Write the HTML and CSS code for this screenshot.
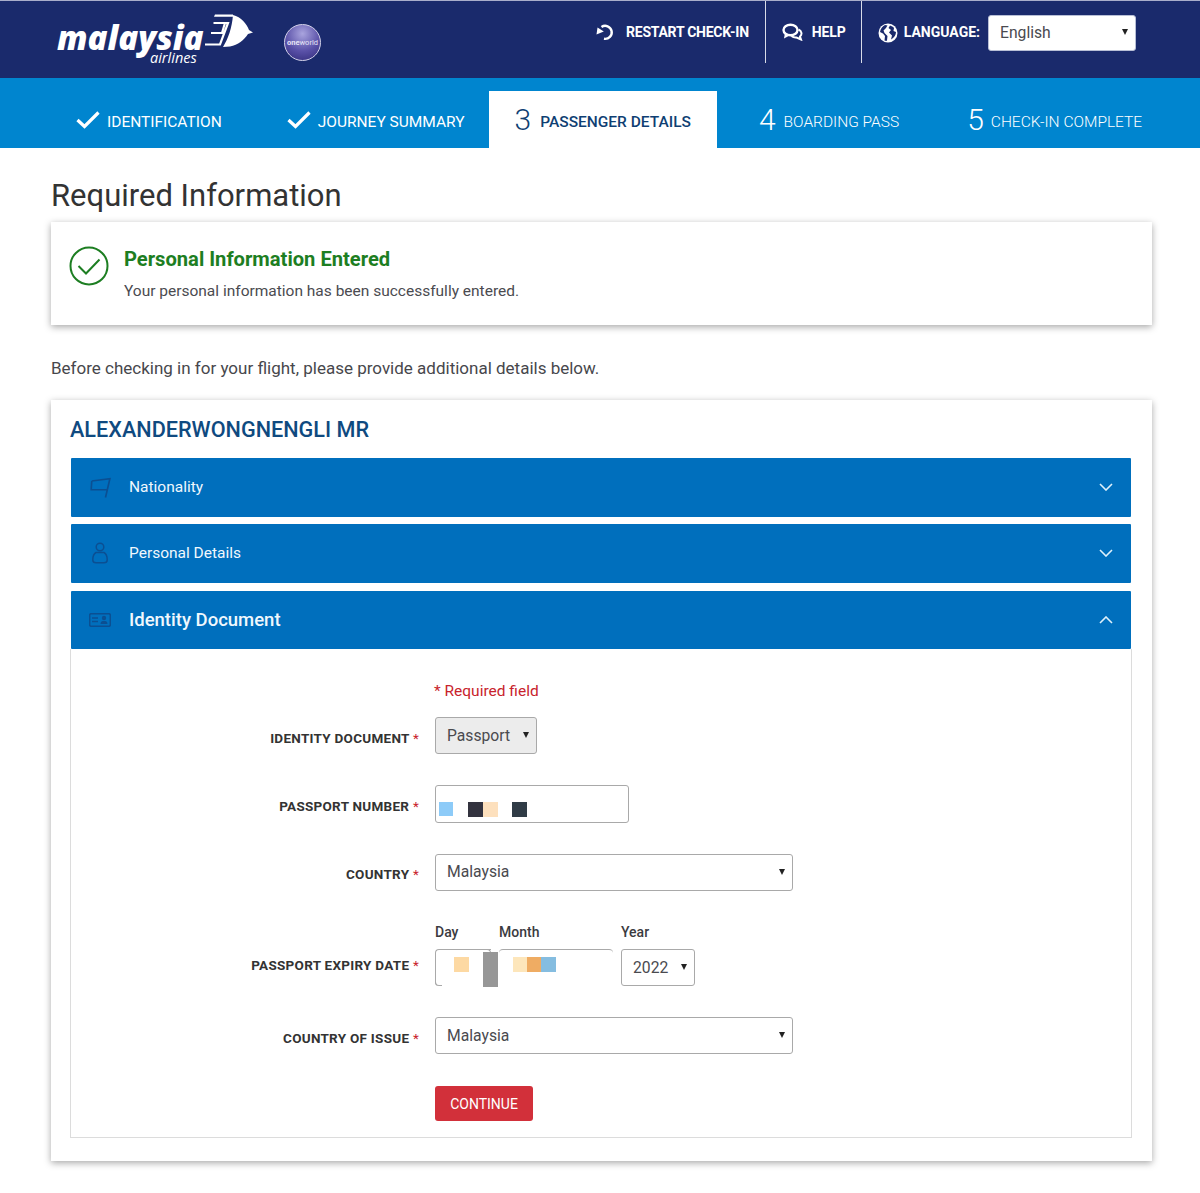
FILE: index.html
```html
<!DOCTYPE html>
<html lang="en">
<head>
<meta charset="utf-8">
<title>Malaysia Airlines Check-in</title>
<link rel="stylesheet" href="styles.css">
</head>
<body>
<header class="topbar">
  <div class="brand">
    <div class="logo">
      <div class="wordmark">
        <span class="wm-main">malaysia</span>
        <span class="wm-sub">airlines</span>
      </div>
      <svg class="kite" viewBox="0 0 60 44" aria-hidden="true">
        <path fill="#fff" d="M15 2.500H33V4.800H14Z"/>
        <path fill="#fff" d="M33 3C41 5 47 12 49 18L53 20.500 48 22C44 28 38 33 30 34.500L23 35C28 27 32 16 33 3Z"/>
        <path fill="none" stroke="#fff" stroke-width="2.200" d="M13.500 11H28L20 32.500H5M11 21H24M25 11L22 21"/>
      </svg>
    </div>
    <div class="oneworld"><span><b>one</b>world</span></div>
  </div>
  <nav class="utility">
    <a class="util util-restart">
      <svg class="util-icon" viewBox="0 0 18 18" aria-hidden="true"><path fill="none" stroke="#fff" stroke-width="2.400" d="M5.500 4A6.500 6.500 0 1 1 8 15.700"/><path fill="#fff" d="M0.500 11.500L1.500 4.500 7.800 8.500Z"/></svg>
      RESTART CHECK-IN
    </a>
    <a class="util util-help">
      <svg class="util-icon help-icon" viewBox="0 0 21 18" aria-hidden="true"><ellipse cx="8.500" cy="7" rx="7" ry="5.300" fill="none" stroke="#fff" stroke-width="2.400"/><path fill="#fff" d="M3 10L2 15.500 8.500 12Z"/><path fill="none" stroke="#fff" stroke-width="2" d="M16.500 6.500C20 8 20.300 11.500 18 13.500L19 16.500 14.500 14.500C12.500 14.800 11 14.300 9.500 13"/></svg>
      <span class="help-text">HELP</span>
    </a>
    <div class="util util-lang">
      <svg class="globe" viewBox="0 0 20 20" aria-hidden="true"><circle cx="10" cy="10" r="9.500" fill="#fff"/><path fill="#1a2a6c" d="M7 2C5 3 2.500 5.500 2 9L5 10.500 7 13 6.500 17.500C8 18 8.500 18 9 17.500L9.500 13 6.500 10 5.500 7.500 8 5 9.500 2.500ZM12 2.500L10.500 5 13 7 11 9.500 14 12.500 13 16.500C16 15 18 12 18 9L15.500 8 16 5C15 3.500 13.500 3 12 2.500Z"/></svg>
      <span class="lang-label">LANGUAGE:</span>
      <div class="select-wrap lang-select"><select class="field"><option>English</option></select></div>
    </div>
  </nav>
</header>

<nav class="steps">
  <div class="step step-1">
    <svg class="tick" viewBox="0 0 24 18" aria-hidden="true"><path fill="none" stroke="#fff" stroke-width="3.200" d="M1.500 9L8.500 15.500 22.500 1.500"/></svg>
    <span>IDENTIFICATION</span>
  </div>
  <div class="step step-2">
    <svg class="tick" viewBox="0 0 24 18" aria-hidden="true"><path fill="none" stroke="#fff" stroke-width="3.200" d="M1.500 9L8.500 15.500 22.500 1.500"/></svg>
    <span>JOURNEY SUMMARY</span>
  </div>
  <div class="step step-3 active"><span class="num">3</span><span>PASSENGER DETAILS</span></div>
  <div class="step step-4 todo"><span class="num">4</span><span>BOARDING PASS</span></div>
  <div class="step step-5 todo"><span class="num">5</span><span>CHECK-IN COMPLETE</span></div>
</nav>

<main class="page">
  <h1 class="title">Required Information</h1>

  <section class="card notice">
    <svg class="ok" viewBox="0 0 40 40" aria-hidden="true"><circle cx="20" cy="20" r="18.500" fill="none" stroke="#1d7e22" stroke-width="2"/><path fill="none" stroke="#1d7e22" stroke-width="2" d="M9.500 20L17 27.500 30.500 13.500"/></svg>
    <div>
      <h2 class="notice-title">Personal Information Entered</h2>
      <p class="notice-text">Your personal information has been successfully entered.</p>
    </div>
  </section>

  <p class="intro">Before checking in for your flight, please provide additional details below.</p>

  <section class="card passenger">
    <h2 class="pax-name">ALEXANDERWONGNENGLI MR</h2>

    <div class="acc-head acc-first">
      <svg class="acc-icon" viewBox="0 0 20 20" aria-hidden="true"><path fill="none" stroke="#0b4f92" stroke-width="1.500" d="M2.500 4.500L19 2.500 15 19.500M2.500 4.500L2 12.500H16.500"/></svg>
      <span class="acc-title">Nationality</span>
      <svg class="chev" viewBox="0 0 14 8" aria-hidden="true"><path fill="none" stroke="#dff1fb" stroke-width="1.600" d="M1 1L7 7 13 1"/></svg>
    </div>
    <div class="acc-head">
      <svg class="acc-icon" viewBox="0 0 20 22" aria-hidden="true"><circle cx="10" cy="5" r="3.800" fill="none" stroke="#0b4f92" stroke-width="1.500"/><path fill="none" stroke="#0b4f92" stroke-width="1.500" d="M6 10.500C3 12 2.800 15 2.800 18 2.800 20 4 20.800 6 20.800H14C16 20.800 17.200 20 17.200 18 17.200 15 17 12 14 10.500Z"/></svg>
      <span class="acc-title">Personal Details</span>
      <svg class="chev" viewBox="0 0 14 8" aria-hidden="true"><path fill="none" stroke="#dff1fb" stroke-width="1.600" d="M1 1L7 7 13 1"/></svg>
    </div>
    <div class="acc-head open">
      <svg class="acc-icon wide" viewBox="0 0 22 14" aria-hidden="true"><rect x="0.700" y="0.700" width="20.600" height="12.600" rx="1.500" fill="none" stroke="#0b4f92" stroke-width="1.500"/><path fill="none" stroke="#0b4f92" stroke-width="1.300" d="M3 5H9M3 8.500H9"/><circle cx="15" cy="5" r="2.200" fill="#0b4f92"/><path fill="#0b4f92" d="M11.500 11C11.500 8.500 13 8 15 8S18.500 8.500 18.500 11Z"/></svg>
      <span class="acc-title big">Identity Document</span>
      <svg class="chev" viewBox="0 0 14 8" aria-hidden="true"><path fill="none" stroke="#dff1fb" stroke-width="1.600" d="M1 7L7 1 13 7"/></svg>
    </div>

    <form class="acc-body">
      <p class="required-note">* Required field</p>

      <div class="row row-doc">
        <label class="lab">IDENTITY DOCUMENT <i>*</i></label>
        <div class="select-wrap doc-select"><select class="field grey"><option>Passport</option></select></div>
      </div>

      <div class="row row-pass">
        <label class="lab">PASSPORT NUMBER <i>*</i></label>
        <div class="mask-input">
          <span class="px c-blue"></span><span class="px c-ink sp-a"></span><span class="px c-peach"></span><span class="px c-slate sp-b"></span>
        </div>
      </div>

      <div class="row row-country">
        <label class="lab">COUNTRY <i>*</i></label>
        <div class="select-wrap wide-select"><select class="field"><option>Malaysia</option></select></div>
      </div>

      <div class="row row-date">
        <label class="lab">PASSPORT EXPIRY DATE <i>*</i></label>
        <div class="date">
          <div class="date-col col-day">
            <span class="date-lab">Day</span>
            <div class="box-day"><span class="px c-sand"></span></div>
            <span class="redact"></span>
          </div>
          <div class="date-col col-month">
            <span class="date-lab">Month</span>
            <div class="box-month"><span class="px c-cream"></span><span class="px c-orange"></span><span class="px c-sky"></span></div>
          </div>
          <div class="date-col col-year">
            <span class="date-lab">Year</span>
            <div class="select-wrap year-select"><select class="field"><option>2022</option></select></div>
          </div>
        </div>
      </div>

      <div class="row row-issue">
        <label class="lab">COUNTRY OF ISSUE <i>*</i></label>
        <div class="select-wrap wide-select"><select class="field"><option>Malaysia</option></select></div>
      </div>

      <div class="row row-btn">
        <span></span>
        <button type="button" class="continue">CONTINUE</button>
      </div>
    </form>
  </section>
</main>
</body>
</html>
```

FILE: styles.css
```css
* { box-sizing: border-box; }
html, body { margin: 0; padding: 0; }
body { font-family: Roboto, "Liberation Sans", sans-serif; color: #3b3b3f; background: #fff; }
h1, h2, p { margin: 0; }

/* header */
.topbar { height: 78px; background: #1a2a6c; border-top: 1px solid #a9aecb; display: flex; justify-content: space-between; padding: 0 64px 0 57px; }
.brand { display: flex; align-items: flex-start; }
.logo { display: flex; align-items: flex-start; width: 227px; flex: none; }
.wordmark { display: flex; flex-direction: column; flex: none; width: 143px; margin-top: 25px; color: #fff; font-family: "Open Sans", sans-serif; font-style: italic; }
.wm-main { display: block; font-size: 33px; font-weight: 800; line-height: 24px; height: 24px; letter-spacing: 0; white-space: nowrap; }
.wm-sub { display: block; font-size: 14.500px; line-height: 12px; height: 12px; margin-top: 2px; margin-right: -55px; padding-left: 93px; font-weight: 400; }
.kite { width: 60px; height: 44px; flex: none; margin-top: 11px; }
.oneworld { width: 37px; height: 37px; border-radius: 50%; border: 1px solid #d4d2ea; background: radial-gradient(circle at 50% 25%, #a9a4de, #5a51a8 55%, #2f2a78); margin: 23px 0 0 0; display: flex; align-items: center; justify-content: center; color: #e6e4f6; font-size: 7.500px; line-height: 1; }
.utility { display: flex; align-items: flex-start; color: #fff; font-weight: 700; font-size: 14px; }
.util { display: flex; align-items: center; height: 62px; padding-bottom: 1px; letter-spacing: -0.250px; }
.util-icon { width: 18px; height: 18px; }
.util-restart { padding: 0 16px 0 0; border-right: 1px solid #d8dbe8; gap: 12px; }
.util-help { padding: 0 15px 0 16px; border-right: 1px solid #d8dbe8; gap: 9px; }
.help-icon { width: 21px; }
.help-text { letter-spacing: -0.100px; }
.util-lang { padding: 0 0 0 16px; gap: 6px; align-items: flex-start; }
.globe { width: 20px; height: 20px; margin-top: 22px; }
.lang-label { margin-top: 23px; letter-spacing: 0; }
.lang-select { width: 148px; height: 36px; margin: 14px 0 0 2px; }

/* select */
.select-wrap { position: relative; display: block; }
.select-wrap::after { content: ""; position: absolute; right: 8px; top: 50%; margin-top: -4px; border-left: 3px solid transparent; border-right: 3px solid transparent; border-top: 6px solid #222; pointer-events: none; }
.field { appearance: none; -webkit-appearance: none; display: block; width: 100%; height: 100%; padding: 0 0 2px 11px; background: #fff; border: 1px solid #a9a9a9; border-radius: 3px; font: 400 15.700px Roboto, sans-serif; color: #4a4a4f; }
.field.grey { background: #ececec; padding-bottom: 0; }
.year-select .field, .row-issue .field { padding-bottom: 0; }
.lang-select .field { border-color: #b8bfd6; }

/* steps */
.steps { height: 70px; background: #0085cf; display: flex; align-items: flex-end; color: #fff; font-size: 15.500px; }
.step { height: 57px; display: flex; align-items: center; white-space: nowrap; padding: 4px 24px 0; }
.step-1 { margin-left: 52px; }
.step-2 { margin-left: 17px; }
.step-3 { padding: 4px 26px 0; }
.step-4 { margin-left: 18px; }
.step-5 { margin-left: 20px; }
.tick { width: 24px; height: 18px; margin: -4px 7px 0 0; flex: none; }
.num { font-size: 30px; font-weight: 300; line-height: 1; margin: -3px 8px 0 0; }
.active { background: #fff; color: #0f3f73; font-weight: 500; }
.active .num { font-weight: 300; margin-right: 9px; color: #0f3f73; }
.todo { font-weight: 300; }
.step-4 .num { margin-right: 8px; }
.step-5 .num { margin-right: 7px; }

/* page */
.page { padding: 29px 48px 32px 51px; }
.title { font-size: 31px; font-weight: 400; line-height: 38px; color: #333; margin-bottom: 7px; }
.card { background: #fff; box-shadow: 0 2px 7px rgba(0,0,0,.35); }
.notice { height: 103px; display: flex; padding: 24px 18px 0 18px; gap: 15px; }
.ok { width: 40px; height: 40px; flex: none; }
.notice-title { font-size: 20.150px; font-weight: 700; color: #1d7e22; line-height: 26px; }
.notice-text { font-size: 15.500px; color: #4b4b50; line-height: 24px; margin-top: 7px; }
.intro { font-size: 17px; line-height: 26px; margin: 30px 0 19px; color: #47474c; }
.passenger { padding: 16px 21px 23px 20px; }
.pax-name { font-size: 21.650px; font-weight: 500; line-height: 28px; color: #0f4a80; margin: 0 0 14px -1px; }

/* accordion */
.acc-head { height: 59px; background: #006fbd; margin-bottom: 8px; display: flex; align-items: center; padding: 0 18px 2px; border-radius: 1px; color: #f0f8fd; }
.acc-first { margin-bottom: 7px; }
.acc-head.open { height: 58px; margin-bottom: 0; padding-bottom: 0; }
.acc-icon { width: 22px; height: 22px; flex: none; margin-right: 18px; }
.acc-icon.wide { height: 14px; }
.acc-title { font-size: 15.500px; flex: 1; }
.acc-title.big { font-size: 18.500px; font-weight: 500; }
.chev { width: 14px; height: 8px; flex: none; }
.acc-body { border: 1px solid #dcdcdc; border-top: 0; height: 489px; padding-top: 31px; margin: 0 -1px; }
.required-note { margin-left: 363px; font-size: 15.500px; line-height: 22px; color: #c8232c; }

/* rows */
.row { display: grid; grid-template-columns: 348px auto; column-gap: 16px; justify-content: start; }
.lab { font-size: 13.500px; font-weight: 700; letter-spacing: 0.270px; color: #333; text-align: right; white-space: nowrap; line-height: 18px; }
.lab i { font-style: normal; font-weight: 400; color: #c8232c; }
.row-doc { margin-top: 15px; }
.row-doc .lab { padding-top: 12px; }
.doc-select { width: 102px; height: 37px; }
.row-pass { margin-top: 31px; }
.row-pass .lab { padding-top: 12px; }
.mask-input { width: 194px; height: 38px; border: 1px solid #a9a9a9; border-radius: 3px; display: flex; padding: 16px 0 0 3px; }
.px { display: block; width: 15px; height: 15px; flex: none; }
.c-blue { background: #8dcbf8; width: 14px; height: 14px; }
.c-ink { background: #33333f; }
.c-peach { background: #fde0bd; }
.c-slate { background: #303c46; }
.sp-a { margin-left: 15px; }
.sp-b { margin-left: 14px; }
.row-country { margin-top: 31px; }
.row-country .lab { padding-top: 11px; }
.wide-select { width: 358px; height: 37px; }
.row-date { margin-top: 31px; }
.row-date .lab { padding-top: 34px; }
.date { display: flex; }
.date-col { display: flex; flex-direction: column; position: relative; }
.date-lab { font-size: 14px; font-weight: 500; color: #3b3b3f; line-height: 18px; height: 18px; margin-top: 1px; margin-bottom: 8px; }
.col-day { width: 64px; }
.col-month { width: 122px; }
.box-day { width: 56px; height: 37px; border: 1px solid #a9a9a9; border-width: 1px 0 0 1px; border-radius: 4px 0 0 4px; padding: 7px 0 0 18px; position: relative; }
.box-day::after { content: ""; position: absolute; left: -1px; bottom: 0; width: 6px; height: 4px; border-left: 1px solid #a9a9a9; border-bottom: 1px solid #a9a9a9; border-radius: 0 0 0 4px; }
.box-day::before { content: ""; position: absolute; right: 0; top: -1px; width: 5px; height: 5px; border-top: 1px solid #a9a9a9; border-right: 1px solid #a9a9a9; border-radius: 0 4px 0 0; }
.box-month { width: 114px; height: 37px; border-top: 1px solid #a9a9a9; border-radius: 4px 4px 0 0; padding: 7px 0 0 14px; display: flex; }
.c-sand { background: #fdd9a3; }
.c-cream { background: #fde6bb; width: 14px; }
.c-orange { background: #efac63; width: 14px; }
.c-sky { background: #85bde0; }
.redact { position: absolute; left: 48px; top: 30px; width: 15px; height: 35px; background: #979797; }
.year-select { width: 74px; height: 37px; }
.row-issue { margin-top: 31px; }
.row-issue .lab { padding-top: 12px; }
.row-btn { margin-top: 32px; }
.continue { width: 98px; height: 35px; background: #d2303a; border: 0; border-radius: 3px; color: #fff; font: 400 14px Roboto, sans-serif; padding: 0; }
```
